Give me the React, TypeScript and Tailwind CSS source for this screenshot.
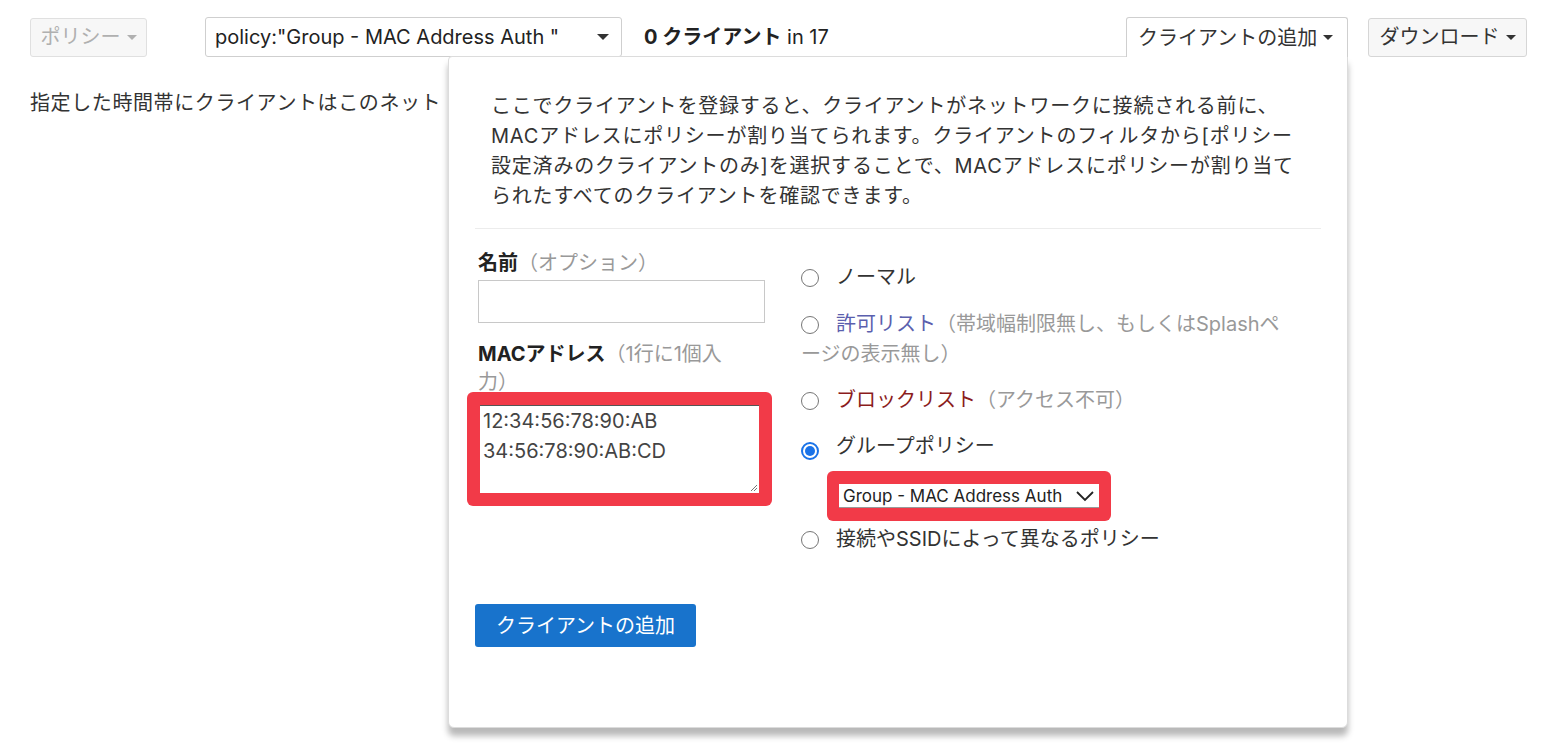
import React from "react";

const FONT = "font-['Inter','Noto_Sans_CJK_JP',sans-serif]";

function Caret({ color = "border-t-[#333]", size = "md" }: { color?: string; size?: "sm" | "md" }) {
  return size === "md" ? (
    <span className={`inline-block w-0 h-0 border-x-[6px] border-x-transparent border-t-[6px] ${color}`} />
  ) : (
    <span className={`inline-block w-0 h-0 border-x-[5px] border-x-transparent border-t-[5px] ${color}`} />
  );
}

function Radio({ checked = false }: { checked?: boolean }) {
  return checked ? (
    <span className="inline-flex items-center justify-center w-[18px] h-[18px] rounded-full border-2 border-[#1a73e8] align-[-3px] mr-[17px]">
      <span className="w-[10px] h-[10px] rounded-full bg-[#1a73e8]" />
    </span>
  ) : (
    <span className="inline-block w-[18px] h-[18px] rounded-full border-[1.5px] border-[#767676] bg-white align-[-3px] mr-[17px]" />
  );
}

function AddClientPopover() {
  return (
    <div className="absolute right-0 top-[39px] w-[900px] h-[672px] bg-white border border-[#dcdcdc] rounded-b-[6px] rounded-tl-[4px] shadow-[0_8px_6px_rgba(0,0,0,0.28)]">
      <p className="pt-[34px] px-[42px] text-[20px] leading-[30px] tracking-[0.8px] text-[#333] whitespace-nowrap">
        ここでクライアントを登録すると、クライアントがネットワークに接続される前に、
        <br />
        MACアドレスにポリシーが割り当てられます。クライアントのフィルタから[ポリシー
        <br />
        設定済みのクライアントのみ]を選択することで、MACアドレスにポリシーが割り当て
        <br />
        られたすべてのクライアントを確認できます。
      </p>
      <div className="mt-[17px] mx-[26px] border-t border-[#ececec]" />

      <div className="flex pl-[29px] pt-[20px]">
        {/* Left column */}
        <div className="w-[287px]">
          <div className="text-[20px] leading-[28px]">
            <span className="font-bold text-[#222]">名前</span>
            <span className="text-[#999]">（オプション）</span>
          </div>
          <div className="mt-[3px] h-[43px] border border-[#c8c8c8]" />
          <div className="mt-[17px] text-[20px] leading-[28px]">
            <span className="font-bold text-[#222]">MACアドレス</span>
            <span className="text-[#999]">（1行に1個入<br />力）</span>
          </div>
          <div className="-mt-1 -ml-[11px] w-[305px] rounded-[6px] bg-[#f23a48] p-[13px]">
            <div className="relative h-[88px] bg-white border-t border-[#555] px-[3px] text-[20px] leading-[30px] text-[#444]">
              <div>12:34:56:78:90:AB</div>
              <div>34:56:78:90:AB:CD</div>
              <svg className="absolute right-[1px] bottom-[1px]" width="8" height="8" viewBox="0 0 8 8">
                <path d="M7 1 L1 7 M7 4 L4 7" stroke="#777" strokeWidth="1" />
              </svg>
            </div>
          </div>
        </div>

        {/* Right column */}
        <div className="ml-[36px] w-[510px] pt-[13px] text-[20px] leading-[30px] text-[#333]">
          <div>
            <Radio />
            ノーマル
          </div>
          <div className="mt-[17px]">
            <Radio />
            <span className="text-[#5b5fae]">許可リスト</span>
            <span className="text-[#999]">（帯域幅制限無し、もしくはSplashペ<br />ージの表示無し）</span>
          </div>
          <div className="mt-[16px]">
            <Radio />
            <span className="text-[#8b1c1c]">ブロックリスト</span>
            <span className="text-[#999]">（アクセス不可）</span>
          </div>
          <div className="mt-[16px]">
            <Radio checked />
            グループポリシー
          </div>
          <div className="mt-[10px] ml-[26px] w-[284px] h-[50px] rounded-[6px] bg-[#f23a48] flex items-center px-[12px]">
            <div className="w-[260px] h-[24px] bg-white border-b border-[#999] flex items-center justify-between pl-[4px] pr-[4px] text-[17px] leading-[24px] text-[#222]">
              <span>Group - MAC Address Auth</span>
              <svg width="20" height="12" viewBox="0 0 20 12">
                <path d="M2 2 L10 10 L18 2" fill="none" stroke="#222" strokeWidth="1.8" />
              </svg>
            </div>
          </div>
          <div className="mt-[3px]">
            <Radio />
            接続やSSIDによって異なるポリシー
          </div>
        </div>
      </div>

      <button className="mt-[50px] ml-[26px] w-[221px] h-[43px] rounded-[3px] bg-[#1873cc] text-white text-[20px]">
        クライアントの追加
      </button>
    </div>
  );
}

export default function App() {
  return (
    <div className={`${FONT} min-h-[746px] bg-white text-[#333]`}>
      <div className="flex items-center pt-[17px] pl-[30px] pr-[37px]">
        <button className="h-[39px] w-[117px] flex items-center justify-center gap-[6px] rounded-[3px] border border-[#e0e0e0] bg-[#f7f7f7] text-[20px] text-[#b0b0b0]">
          ポリシー
          <Caret size="sm" color="border-t-[#b0b0b0]" />
        </button>
        <div className="ml-[58px] h-[40px] w-[417px] flex items-center justify-between pl-[9px] pr-[12px] rounded-[3px] border border-[#cfcfcf] text-[20px] text-[#222]">
          <span>policy:"Group - MAC Address Auth "</span>
          <Caret />
        </div>
        <div className="ml-[22px] text-[20px] text-[#222]">
          <span className="font-bold">0 クライアント</span> in 17
        </div>
        <div className="flex-1" />
        <div className="relative">
          <button className="relative z-10 h-[40px] w-[222px] flex items-center gap-[6px] pl-[11px] rounded-t-[3px] border border-b-0 border-[#cfcfcf] bg-white text-[20px] text-[#333]">
            クライアントの追加
            <Caret size="sm" />
          </button>
          <AddClientPopover />
        </div>
        <button className="ml-[20px] h-[39px] w-[159px] flex items-center justify-center gap-[6px] rounded-[3px] border border-[#d6d6d6] bg-[#f7f7f7] text-[20px] text-[#333]">
          ダウンロード
          <Caret size="sm" />
        </button>
      </div>
      <p className="mt-[31px] ml-[30px] whitespace-nowrap text-[20px] leading-[30px] tracking-[0.6px] text-[#333]">
        指定した時間帯にクライアントはこのネット
      </p>
    </div>
  );
}
